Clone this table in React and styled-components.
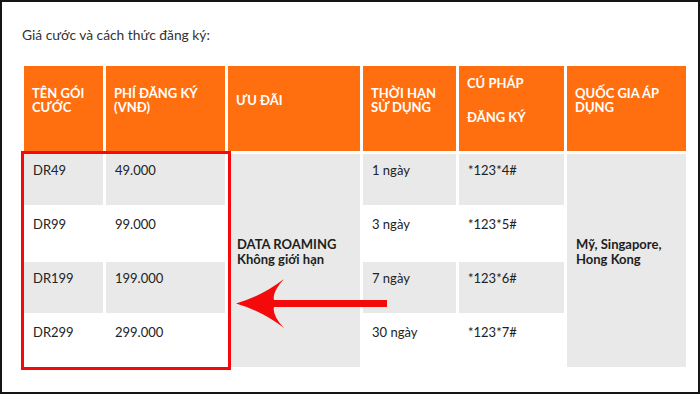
import React from 'react'
import styled, { createGlobalStyle } from 'styled-components'

const GlobalStyle = createGlobalStyle`
    html, body {
        margin: 0;
        padding: 0;
        background: #ffffff;
    }
    body {
        font-family: Lato, "Liberation Sans", sans-serif;
    }
`

const rows = [
    { code: 'DR49', price: '49.000', days: '1 ngày', syntax: '*123*4#', shade: true },
    { code: 'DR99', price: '99.000', days: '3 ngày', syntax: '*123*5#', shade: false },
    { code: 'DR199', price: '199.000', days: '7 ngày', syntax: '*123*6#', shade: true },
    { code: 'DR299', price: '299.000', days: '30 ngày', syntax: '*123*7#', shade: false },
]

const App = () => {
  return (
    <Frame>
        <GlobalStyle />
        <Title>Giá cước và cách thức đăng ký:</Title>
        <PriceTable>
            <colgroup>
                <col style={{ width: 79 }} />
                <col style={{ width: 119 }} />
                <col style={{ width: 132 }} />
                <col style={{ width: 93 }} />
                <col style={{ width: 105 }} />
                <col style={{ width: 119 }} />
            </colgroup>
            <thead>
                <tr>
                    <HeadCell>TÊN GÓI CƯỚC</HeadCell>
                    <HeadCell>PHÍ ĐĂNG KÝ (VNĐ)</HeadCell>
                    <HeadCell>ƯU ĐÃI</HeadCell>
                    <HeadCell>THỜI HẠN SỬ DỤNG</HeadCell>
                    <HeadCell>
                        <HeadLine>CÚ PHÁP</HeadLine>
                        <HeadLine $gap>ĐĂNG KÝ</HeadLine>
                    </HeadCell>
                    <HeadCell>QUỐC GIA ÁP DỤNG</HeadCell>
                </tr>
            </thead>
            <tbody>
                {rows.map((r, i) => (
                    <tr key={r.code}>
                        <Cell $shade={r.shade}>{r.code}</Cell>
                        <Cell $shade={r.shade}>{r.price}</Cell>
                        {i === 0 && (
                            <MergedCell rowSpan={4}>
                                DATA ROAMING<br />Không giới hạn
                            </MergedCell>
                        )}
                        <Cell $shade={r.shade}>{r.days}</Cell>
                        <Cell $shade={r.shade}>{r.syntax}</Cell>
                        {i === 0 && (
                            <MergedCell rowSpan={4}>
                                Mỹ, Singapore,<br />Hong Kong
                            </MergedCell>
                        )}
                    </tr>
                ))}
            </tbody>
        </PriceTable>
        <Highlight />
        <Arrow width="700" height="394" viewBox="0 0 700 394">
            <path
                d="M236 303.5 Q262 296 284 279 Q272 292 274 300 L387 300 L387 307 L274 307 Q272 315 284 328 Q262 311 236 303.5 Z"
                fill="#f40a0a"
            />
        </Arrow>
    </Frame>
  )
}

export default App


const Frame = styled.div`
    position: relative;
    box-sizing: border-box;
    width: 700px;
    height: 394px;
    border: 2px solid #151515;
    padding: 25px 0 0 19px;
    overflow: hidden;
    background: #ffffff;
`
const Title = styled.div`
    font-size: 13.8px;
    line-height: 16px;
    color: #333333;
    padding-left: 1px;
    margin-bottom: 20px;
`
const PriceTable = styled.table`
    border-collapse: separate;
    border-spacing: 3px;
    table-layout: fixed;
    width: 668px;
`
const HeadCell = styled.th`
    background: #ff6f0f;
    color: #ffffff;
    font-size: 13px;
    line-height: 14px;
    font-weight: 700;
    text-align: left;
    vertical-align: middle;
    height: 68px;
    padding: 0 8px 17px 8px;
`
const HeadLine = styled.div`
    margin-top: ${p => (p.$gap ? '20px' : '0')};
`
const Cell = styled.td`
    background: ${p => (p.$shade ? '#e9e9e9' : '#ffffff')};
    color: #222222;
    font-size: 13px;
    line-height: 16px;
    vertical-align: top;
    height: 43px;
    padding: 8px 8px 0 9px;
`
const MergedCell = styled.td`
    background: #e9e9e9;
    color: #1e1e1e;
    font-size: 13px;
    line-height: 15px;
    font-weight: 700;
    vertical-align: middle;
    padding: 0 8px 18px 9px;
`
const Highlight = styled.div`
    position: absolute;
    left: 19px;
    top: 149px;
    width: 210px;
    height: 219px;
    box-sizing: border-box;
    border: 3px solid #f40a0a;
`
const Arrow = styled.svg`
    position: absolute;
    left: -2px;
    top: -2px;
    pointer-events: none;
`
